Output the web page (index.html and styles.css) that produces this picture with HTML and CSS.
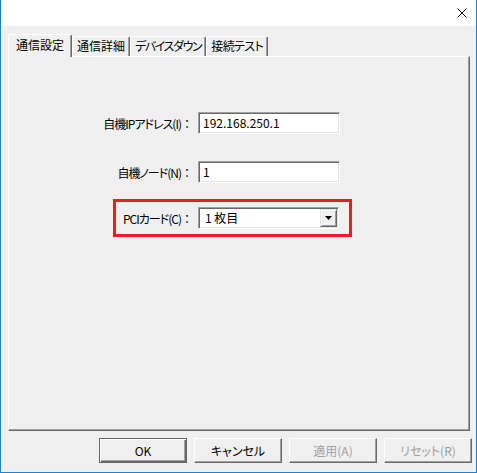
FILE: index.html
```html
<!DOCTYPE html>
<html lang="ja">
<head>
<meta charset="UTF-8">
<meta name="viewport" content="width=device-width, initial-scale=1.0">
<title>通信設定</title>
<link rel="stylesheet" href="styles.css">
</head>
<body>
<div class="window">
  <div class="titlebar">
    <svg class="close" width="10" height="10" viewBox="0 0 10 10">
      <path d="M0.5 0.5L9.5 9.5M9.5 0.5L0.5 9.5" stroke="#000" stroke-width="1"/>
    </svg>
  </div>
  <div class="content">
    <div class="tabs">
      <div class="tab active">通信設定</div>
      <div class="tab">通信詳細</div>
      <div class="tab tight">デバイスダウン</div>
      <div class="tab semi">接続テスト</div>
    </div>
    <div class="panel">
      <div class="form">
        <div class="row">
          <span class="label">自機IPアドレス(I)<span class="colon">：</span></span>
          <div class="field">192.168.250.1</div>
        </div>
        <div class="row">
          <span class="label">自機ノード(N)<span class="colon">：</span></span>
          <div class="field">1</div>
        </div>
        <div class="row pick">
          <span class="label">PCIカード(C)<span class="colon">：</span></span>
          <div class="field select">
            <span>1 枚目</span>
            <span class="drop">
              <svg width="7" height="4" viewBox="0 0 7 4"><polygon points="0,0 7,0 3.5,4" fill="#000"/></svg>
            </span>
          </div>
        </div>
      </div>
    </div>
    <div class="actions">
      <button type="button" class="btn default">OK</button>
      <button type="button" class="btn">キャンセル</button>
      <button type="button" class="btn disabled">適用(A)</button>
      <button type="button" class="btn disabled">リセット(R)</button>
    </div>
  </div>
</div>
</body>
</html>
```

FILE: styles.css
```css
/* Dialog window */
* {
  box-sizing: border-box;
}
body {
  margin: 0;
  font-family: "Noto Sans CJK JP", "Noto Sans", sans-serif;
  font-size: 12px;
  color: #000;
  font-feature-settings: "palt";
}
.window {
  width: 477px;
  height: 473px;
  border: 1px solid #1883d7;
  border-top: none;
  background: #f0f0f0;
  display: flex;
  flex-direction: column;
}
.titlebar {
  height: 26px;
  background: #fff;
  display: flex;
  justify-content: flex-end;
  align-items: flex-start;
  padding: 8px 9px 0 0;
}
.content {
  flex: 1;
  display: flex;
  flex-direction: column;
  padding: 8px 6px 0 7px;
}

/* Tabs */
.tabs {
  display: flex;
  align-items: flex-end;
  height: 22px;
}
.tab {
  height: 20px;
  line-height: 18px;
  padding: 0 4px;
  border: 1px solid #fff;
  border-bottom: none;
  border-right-color: #696969;
  box-shadow: inset -1px 0 #a0a0a0;
  border-radius: 2px 2px 0 0;
  white-space: nowrap;
}
.tab.tight {
  letter-spacing: -1.4px;
}
.tab.semi {
  letter-spacing: -0.6px;
}
.tab.active {
  height: 23px;
  line-height: 20px;
  margin-bottom: -1px;
  padding: 0 7px;
  position: relative;
  z-index: 1;
  background: #f0f0f0;
}
.panel {
  height: 375px;
  border: 1px solid;
  border-color: #fff #696969 #696969 #fff;
  box-shadow: inset -1px -1px #a0a0a0;
}

/* Form */
.form {
  display: flex;
  flex-direction: column;
  align-items: flex-start;
  padding-top: 55px;
}
.row {
  display: flex;
  align-items: center;
}
.row + .row {
  margin-top: 27px;
}
.label {
  width: 184px;
  margin-right: 5px;
  text-align: right;
  white-space: nowrap;
  letter-spacing: -1px;
}
.colon {
  letter-spacing: 0;
  font-feature-settings: normal;
}
.field {
  width: 142px;
  height: 22px;
  line-height: 20px;
  padding-left: 4px;
  background: #fff;
  border: 1px solid;
  border-color: #a0a0a0 #fff #fff #a0a0a0;
  box-shadow: inset 1px 1px #696969, inset -1px -1px #e3e3e3;
}
.row.pick {
  margin-top: 16px;
  margin-left: 104px;
  padding: 5px 10px 5px 0;
  border: 3px solid #ed1c24;
}
.pick .label {
  width: 77px;
}
.select {
  width: 141px;
  display: flex;
  justify-content: space-between;
  padding: 1px 1px 1px 6px;
  line-height: 18px;
}
.drop {
  width: 17px;
  height: 18px;
  background: #f0f0f0;
  border: 1px solid;
  border-color: #e3e3e3 #696969 #696969 #e3e3e3;
  box-shadow: inset 1px 1px #fff, inset -1px -1px #a0a0a0;
  display: flex;
  align-items: center;
  justify-content: center;
}

/* Buttons */
.actions {
  display: flex;
  justify-content: flex-end;
  gap: 7px;
  margin-top: 7px;
  margin-right: -2px;
}
.btn {
  width: 88px;
  height: 25px;
  padding: 0;
  font: inherit;
  color: #000;
  background: #f0f0f0;
  border: 1px solid;
  border-color: #fff #696969 #696969 #fff;
  box-shadow: inset -1px -1px #a0a0a0;
  line-height: 23px;
}
.btn.default {
  border-color: #646464;
  box-shadow: inset 1px 1px #fff, inset -1px -1px #696969, inset -2px -2px #a0a0a0;
}
.btn.disabled {
  color: #a0a0a0;
}
```
